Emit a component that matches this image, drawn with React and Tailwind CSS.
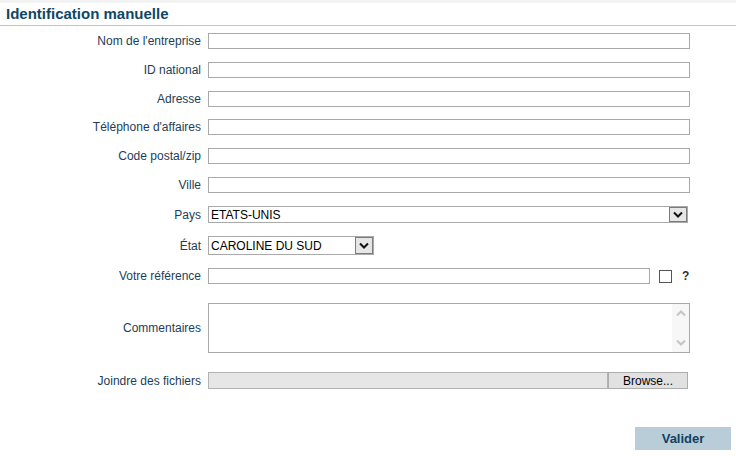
const font = { fontFamily: '"Liberation Sans", Arial, sans-serif' }

function Chevron({ className = '' }) {
  return (
    <svg width="10" height="7" viewBox="0 0 10 7" className={className}>
      <path d="M1 1.5 L5 5.5 L9 1.5" fill="none" stroke="currentColor" strokeWidth="2" />
    </svg>
  )
}

function Row({ label, top, children }) {
  return (
    <div className={`flex items-center ${top}`}>
      <div className="w-[201px] text-right text-[12px] text-[#1d3d58] leading-none">
        <span className="inline-block">{label}</span>
      </div>
      <div className="ml-[7px] flex items-center">{children}</div>
    </div>
  )
}

function TextInput({ w = 'w-[482px]' }) {
  return <div className={`${w} h-[16px] border border-[#a9a9a9] bg-white`} />
}

function Select({ value, w }) {
  return (
    <div className={`${w} flex items-stretch border border-[#a9a9a9] bg-white`}>
      <div className="flex-1 flex items-center pl-[2px] text-[12px] leading-none text-black">{value}</div>
      <div className="w-[18px] flex items-center justify-center bg-[#e6e6e6] border border-[#7c7c7c] text-[#111]">
        <Chevron />
      </div>
    </div>
  )
}

export default function App() {
  return (
    <div className="w-[736px] h-[456px] bg-white overflow-hidden" style={font}>
      <div className="h-[3px] bg-[#f3f3f3]" />
      <div className="h-[23px] border-b border-[#c4c4c4] pl-[6px] pt-[2px]">
        <h1 className="text-[15px] font-bold leading-[18px] text-[#0e4766]">Identification manuelle</h1>
      </div>

      <div className="flex flex-col">
        <Row label="Nom de l'entreprise" top="mt-[7px]"><TextInput /></Row>
        <Row label="ID national" top="mt-[13px]"><TextInput /></Row>
        <Row label="Adresse" top="mt-[13px]"><TextInput /></Row>
        <Row label="Téléphone d'affaires" top="mt-[12px]"><TextInput /></Row>
        <Row label="Code postal/zip" top="mt-[13px]"><TextInput /></Row>
        <Row label="Ville" top="mt-[13px]"><TextInput /></Row>
        <Row label="Pays" top="mt-[13px]">
          <div className="h-[17px] flex">
            <Select value="ETATS-UNIS" w="w-[480px]" />
          </div>
        </Row>
        <Row label="État" top="mt-[13px]">
          <div className="h-[19px] flex">
            <Select value="CAROLINE DU SUD" w="w-[166px]" />
          </div>
        </Row>
        <Row label="Votre référence" top="mt-[13px]">
          <TextInput w="w-[442px]" />
          <div className="ml-[9px] w-[13px] h-[13px] border border-[#555] bg-white" />
          <span className="ml-[10px] text-[12px] font-bold text-[#333] leading-none">?</span>
        </Row>
        <Row label="Commentaires" top="mt-[19px]">
          <div className="w-[482px] h-[50px] border border-[#a9a9a9] bg-white flex justify-end">
            <div className="w-[17px] flex flex-col items-center justify-between py-[6px] bg-[#f7f7f7] text-[#c4c4c4]">
              <Chevron className="rotate-180" />
              <Chevron />
            </div>
          </div>
        </Row>
        <Row label="Joindre des fichiers" top="mt-[19px]">
          <div className="w-[480px] h-[17px] flex">
            <div className="flex-1 bg-[#e6e6e6] border border-[#b3b3b3]" />
            <div className="w-[80px] flex items-center justify-center bg-[#e1e1e1] border border-[#adadad] text-[12px] leading-none text-black">
              Browse...
            </div>
          </div>
        </Row>
      </div>

      <div className="flex justify-end pr-[5px] mt-[38px]">
        <button className="w-[96px] h-[23px] bg-[#b9cdd9] text-[13px] font-bold text-[#123f60]">
          Valider
        </button>
      </div>
    </div>
  )
}
